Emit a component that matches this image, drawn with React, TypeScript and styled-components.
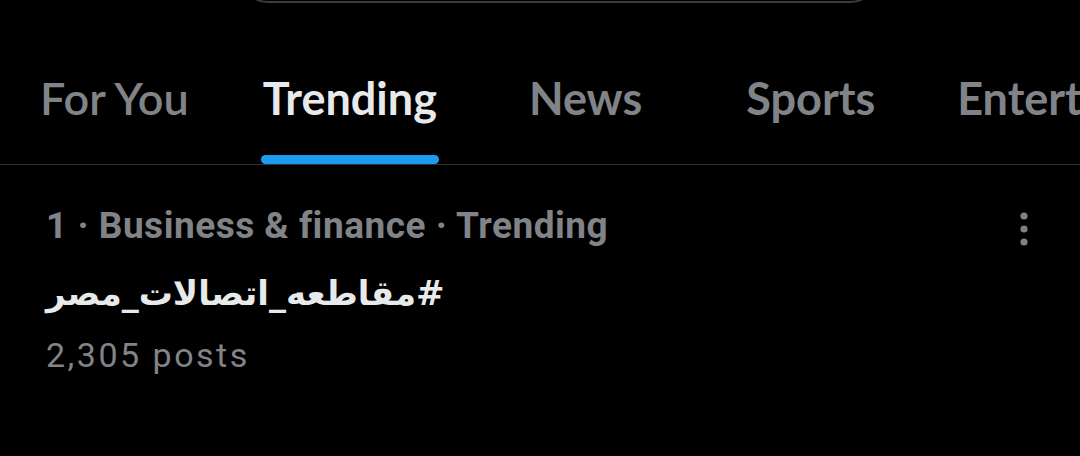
import React from 'react';
import styled, { createGlobalStyle } from 'styled-components';

const GlobalStyle = createGlobalStyle`
  *, *::before, *::after {
    box-sizing: border-box;
  }
  html, body {
    margin: 0;
    padding: 0;
    background: #000;
  }
  body {
    font-family: 'Lato', 'Noto Sans', sans-serif;
    color: #e7e9ea;
    overflow: hidden;
  }
`;

const tabs = [
  { label: 'For You', offset: 40, weight: 600 },
  { label: 'Trending', offset: 74, weight: 700, active: true },
  { label: 'News', offset: 92, weight: 700 },
  { label: 'Sports', offset: 104, weight: 700 },
  { label: 'Entertainment', offset: 82, weight: 700 },
];

const App: React.FC = () => {
  return (
    <>
      <GlobalStyle />
      <Page>
        <SearchStrip>
          <SearchPill />
        </SearchStrip>
        <TabBar>
          {tabs.map(tab => (
            <Tab key={tab.label} $offset={tab.offset}>
              <TabLabel $active={!!tab.active} $weight={tab.weight}>
                {tab.label}
              </TabLabel>
              <Indicator $active={!!tab.active} />
            </Tab>
          ))}
        </TabBar>
        <TrendRow>
          <TrendBody>
            <TrendMeta>1 · Business &amp; finance · Trending</TrendMeta>
            <TrendTitle>
              <span dir="rtl">#مقاطعه_اتصالات_مصر</span>
            </TrendTitle>
            <TrendCount>2,305 posts</TrendCount>
          </TrendBody>
          <MoreButton aria-label="More">
            <svg width="14" height="40" viewBox="0 0 14 40" fill="#7d8185">
              <circle cx="7" cy="7" r="3.6" />
              <circle cx="7" cy="20" r="3.6" />
              <circle cx="7" cy="33" r="3.6" />
            </svg>
          </MoreButton>
        </TrendRow>
      </Page>
    </>
  );
};

const Page = styled.div`
  width: 1080px;
  height: 456px;
  background: #000;
  overflow: hidden;
`;

const SearchStrip = styled.div`
  height: 3px;
  overflow: hidden;
  padding: 0 200px 0 238px;
`;

const SearchPill = styled.div`
  height: 60px;
  margin-top: -57px;
  border: 2px solid #3a3c3f;
  border-radius: 30px;
`;

const TabBar = styled.div`
  display: flex;
  align-items: flex-end;
  height: 162px;
  border-bottom: 1px solid #2f3336;
  white-space: nowrap;
  overflow: hidden;
`;

const Tab = styled.div<{ $offset: number }>`
  display: flex;
  flex-direction: column;
  align-items: stretch;
  flex-shrink: 0;
  margin-left: ${p => p.$offset}px;
`;

const TabLabel = styled.span<{ $active: boolean; $weight: number }>`
  font-size: 45px;
  line-height: 45px;
  font-weight: ${p => p.$weight};
  color: ${p => (p.$active ? '#e7e9ea' : '#808488')};
`;

const Indicator = styled.div<{ $active: boolean }>`
  height: 9px;
  margin: 34px -2px 0;
  border-radius: 5px;
  background: ${p => (p.$active ? '#1d9bf0' : 'transparent')};
`;

const TrendRow = styled.div`
  display: flex;
  align-items: flex-start;
  justify-content: space-between;
  padding: 41px 45px 0 46px;
`;

const TrendBody = styled.div`
  display: flex;
  flex-direction: column;
`;

const TrendMeta = styled.div`
  font-family: 'Roboto', 'Liberation Sans', sans-serif;
  font-size: 37px;
  line-height: 40px;
  font-weight: 700;
  letter-spacing: 0.5px;
  color: #808488;
`;

const TrendTitle = styled.div`
  margin-top: 24px;
  font-family: 'DejaVu Sans', 'Noto Sans', sans-serif;
  font-size: 34px;
  line-height: 46px;
  font-weight: 700;
  color: #e7e9ea;

  span {
    display: inline-block;
  }
`;

const TrendCount = styled.div`
  margin-top: 19px;
  font-family: 'Roboto', 'Liberation Sans', sans-serif;
  font-size: 34px;
  line-height: 40px;
  font-weight: 400;
  letter-spacing: 2.5px;
  color: #808488;
`;

const MoreButton = styled.div`
  display: flex;
  align-items: center;
  justify-content: center;
  width: 22px;
  margin-top: 3px;
`;

export default App;
